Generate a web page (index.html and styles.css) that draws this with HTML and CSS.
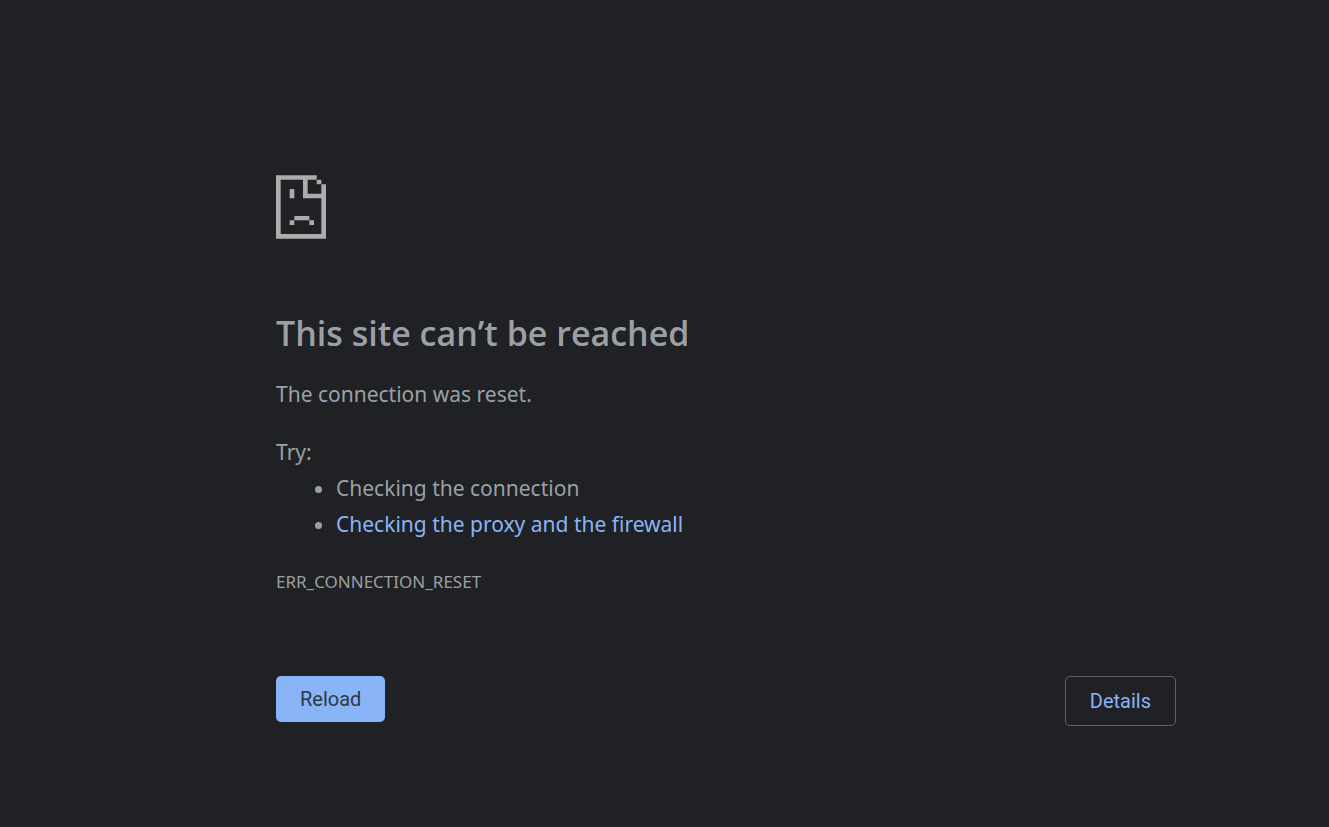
FILE: index.html
```html
<!DOCTYPE html>
<html lang="en">
<head>
    <meta charset="UTF-8">
    <meta name="viewport" content="width=device-width, initial-scale=1.0">
    <title>This site can’t be reached</title>
    <link rel="stylesheet" href="styles.css">
</head>
<body>
    <main class="container">
        <!-- Sad page icon -->
        <svg class="icon" viewBox="0 0 150 190" aria-hidden="true">
            <path d="M0 0H122V13H95V55H136V27H150V190H0ZM14 13V176H136V69H81V13Z" fill-rule="evenodd"/>
            <path d="M122 13H136V27H122ZM41 41H55V69H41ZM55 122H100V135H55ZM41 135H55V149H41ZM100 135H114V149H100Z"/>
        </svg>
        <h1>This site can’t be reached</h1>
        <p class="summary">The connection was reset.</p>
        <p class="try">Try:</p>
        <ul>
            <li>Checking the connection</li>
            <li><a href="#">Checking the proxy and the firewall</a></li>
        </ul>
        <p class="error-code">ERR_CONNECTION_RESET</p>
        <div class="buttons">
            <button type="button" class="reload">Reload</button>
            <button type="button" class="details">Details</button>
        </div>
    </main>
</body>
</html>
```
FILE: styles.css
```css
body { font-family: 'Segoe UI', 'Noto Sans', sans-serif; background: #202124; color: #9aa0a6; margin: 0; font-size: 21px; line-height: 36px; }
.container { padding: 175px 153px 40px 276px; }
.icon { display: block; width: 50px; height: 64px; fill: #acacac; }
h1 { font-family: 'Segoe UI', 'Open Sans', sans-serif; font-size: 34px; line-height: 44px; font-weight: 600; margin: 72px 0 21px; }
p { margin: 0; }
.try { margin-top: 22px; }
ul { margin: 0; padding-left: 60px; }
a { color: #8ab4f8; text-decoration: none; }
.error-code { font-size: 17px; margin-top: 22px; }
.buttons { display: flex; justify-content: space-between; align-items: flex-start; margin-top: 76px; }
button { font-family: Roboto, sans-serif; font-size: 20px; line-height: 24px; border-radius: 5px; cursor: pointer; }
.reload { background: #8ab4f8; color: #2f3846; border: none; padding: 11px 24px; }
.details { background: #202124; color: #8ab4f8; border: 1px solid #5f6368; padding: 12px 24px; }
.reload:hover { background: #aecbfa; }
```
